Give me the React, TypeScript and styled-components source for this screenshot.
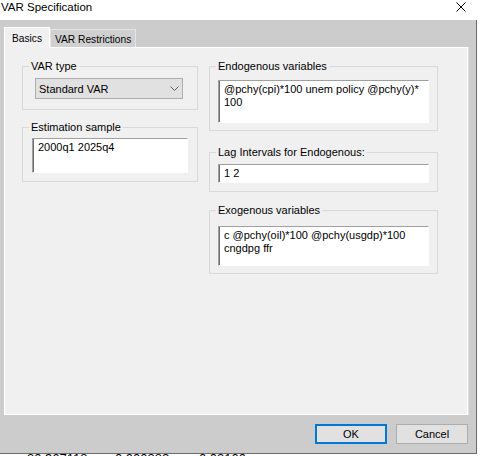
import React from "react";
import styled, {createGlobalStyle} from "styled-components";

const GlobalStyle = createGlobalStyle`
  html, body {
    margin: 0;
    padding: 0;
    background: #ffffff;
  }
  body {
    font-family: "Liberation Sans", Arial, sans-serif;
    font-size: 11px;
    color: #000000;
  }
`;

const Screen = styled.div`
  width: 479px;
  height: 456px;
  overflow: hidden;
  display: flex;
  flex-direction: column;
`;

const Dialog = styled.div`
  width: 477px;
  display: flex;
  flex-direction: column;
`;

const TitleBar = styled.div`
  height: 20px;
  box-sizing: border-box;
  background: #ffffff;
  display: flex;
  justify-content: space-between;
  align-items: flex-start;
  padding: 0 11px 0 1px;
`;

const Title = styled.div`
  font-size: 11.5px;
  line-height: 14px;
`;

const CloseGlyph = styled.svg`
  margin-top: 2px;
`;

const Body = styled.div`
  background: #cccccc;
  border-right: 1px solid #6d6d6d;
  border-bottom: 1px solid #6d6d6d;
  padding: 7px 8px 9px 4px;
  display: flex;
  flex-direction: column;
`;

const TabStrip = styled.div`
  height: 20px;
  display: flex;
  align-items: flex-end;
  position: relative;
  z-index: 1;
`;

const Tab = styled.div<{$active?: boolean}>`
  height: ${p => (p.$active ? 21 : 18)}px;
  margin-bottom: ${p => (p.$active ? -1 : 0)}px;
  box-sizing: border-box;
  padding: 1px ${p => (p.$active ? 7 : 4)}px 0 ${p => (p.$active ? 7 : 4)}px;
  background: ${p => (p.$active ? "#f0f0f0" : "#d0d0d0")};
  border: 1px solid ${p => (p.$active ? "#ffffff" : "#e4e4e4")};
  border-bottom: none;
  display: flex;
  align-items: center;
  font-size: 10.2px;
`;

const TabPage = styled.div`
  height: 368px;
  box-sizing: border-box;
  background: #f0f0f0;
  border: 1px solid #ffffff;
  box-shadow: 1px 0 0 #e2e2e2;
  padding: 12px 0 0 17px;
  display: grid;
  grid-template-columns: 176px 229px;
  column-gap: 11px;
  align-items: start;
`;

const Column = styled.div`
  display: flex;
  flex-direction: column;
  gap: 11px;
`;

const Group = styled.fieldset<{$pt: number; $pb: number; $mt?: number}>`
  width: 100%;
  box-sizing: border-box;
  min-width: 0;
  margin: ${p => p.$mt ?? 0}px 0 0 0;
  padding: ${p => p.$pt}px 8px ${p => p.$pb}px 8px;
  border: 1px solid #d9d9d9;
`;

const Legend = styled.legend`
  padding: 0 2px;
  margin-left: -2px;
  font-size: 11px;
  line-height: 13px;
`;

const TextField = styled.div<{$h: number; $inset?: number}>`
  height: ${p => p.$h}px;
  box-sizing: border-box;
  margin: 0 ${p => p.$inset ?? 0}px;
  background: #ffffff;
  border-top: 1px solid #a0a0a0;
  border-left: 1px solid #a0a0a0;
  border-right: 1px solid #ffffff;
  border-bottom: 1px solid #ffffff;
  box-shadow: inset 1px 0 0 #6d6d6d;
  padding: 2px 5px 0 5px;
  line-height: 13px;
  white-space: pre-line;
`;

const Select = styled.div`
  height: 21px;
  box-sizing: border-box;
  margin: 0 6px 0 4px;
  background: #e1e1e1;
  border: 1px solid #adadad;
  display: flex;
  align-items: center;
  justify-content: space-between;
  padding: 0 3px 0 3px;
`;

const Chevron = styled.svg`
  margin-top: -1px;
`;

const ButtonRow = styled.div`
  display: flex;
  justify-content: flex-end;
  gap: 9px;
  margin-top: 9px;
`;

const Button = styled.button<{$default?: boolean}>`
  width: 72px;
  height: 20px;
  box-sizing: border-box;
  padding: 0;
  background: #e1e1e1;
  border: ${p => (p.$default ? "2px solid #0078d7" : "1px solid #adadad")};
  font: 11px "Liberation Sans", Arial, sans-serif;
  color: #000000;
`;

const Behind = styled.div`
  height: 2px;
  overflow: hidden;
  display: flex;
  padding-left: 27px;
`;

const BehindCell = styled.span<{$w: number}>`
  width: ${p => p.$w}px;
  font-size: 13px;
  line-height: 13px;
  margin-top: -2px;
`;

export default function App() {
    return (
        <Screen>
            <GlobalStyle/>
            <Dialog>
                <TitleBar>
                    <Title>VAR Specification</Title>
                    <CloseGlyph width="10" height="10" viewBox="0 0 10 10">
                        <path d="M0.5 0.5 L9.5 9.5 M9.5 0.5 L0.5 9.5" stroke="#000" strokeWidth="1" fill="none"/>
                    </CloseGlyph>
                </TitleBar>
                <Body>
                    <TabStrip>
                        <Tab $active>Basics</Tab>
                        <Tab>VAR Restrictions</Tab>
                    </TabStrip>
                    <TabPage>
                        <Column>
                            <Group $pt={5} $pb={10}>
                                <Legend>VAR type</Legend>
                                <Select>
                                    <span>Standard VAR</span>
                                    <Chevron width="9" height="5" viewBox="0 0 9 5">
                                        <path d="M0.5 0.5 L4.5 4.5 L8.5 0.5" stroke="#606060" strokeWidth="1" fill="none"/>
                                    </Chevron>
                                </Select>
                            </Group>
                            <Group $pt={4} $pb={8}>
                                <Legend>Estimation sample</Legend>
                                <TextField $h={35} $inset={1}>2000q1 2025q4</TextField>
                            </Group>
                        </Column>
                        <Column>
                            <Group $pt={7} $pb={7}>
                                <Legend>Endogenous variables</Legend>
                                <TextField $h={43}>{"@pchy(cpi)*100 unem policy @pchy(y)*\n100"}</TextField>
                            </Group>
                            <Group $pt={5} $pb={8} $mt={4}>
                                <Legend>Lag Intervals for Endogenous:</Legend>
                                <TextField $h={19}>1 2</TextField>
                            </Group>
                            <Group $pt={9} $pb={7} $mt={1}>
                                <Legend>Exogenous variables</Legend>
                                <TextField $h={40}>{"c @pchy(oil)*100 @pchy(usgdp)*100\ncngdpg ffr"}</TextField>
                            </Group>
                        </Column>
                    </TabPage>
                    <ButtonRow>
                        <Button $default>OK</Button>
                        <Button>Cancel</Button>
                    </ButtonRow>
                </Body>
            </Dialog>
            <Behind>
                <BehindCell $w={88}>30.967118</BehindCell>
                <BehindCell $w={84}>0.000382</BehindCell>
                <BehindCell $w={60}>0.03100</BehindCell>
            </Behind>
        </Screen>
    );
}
